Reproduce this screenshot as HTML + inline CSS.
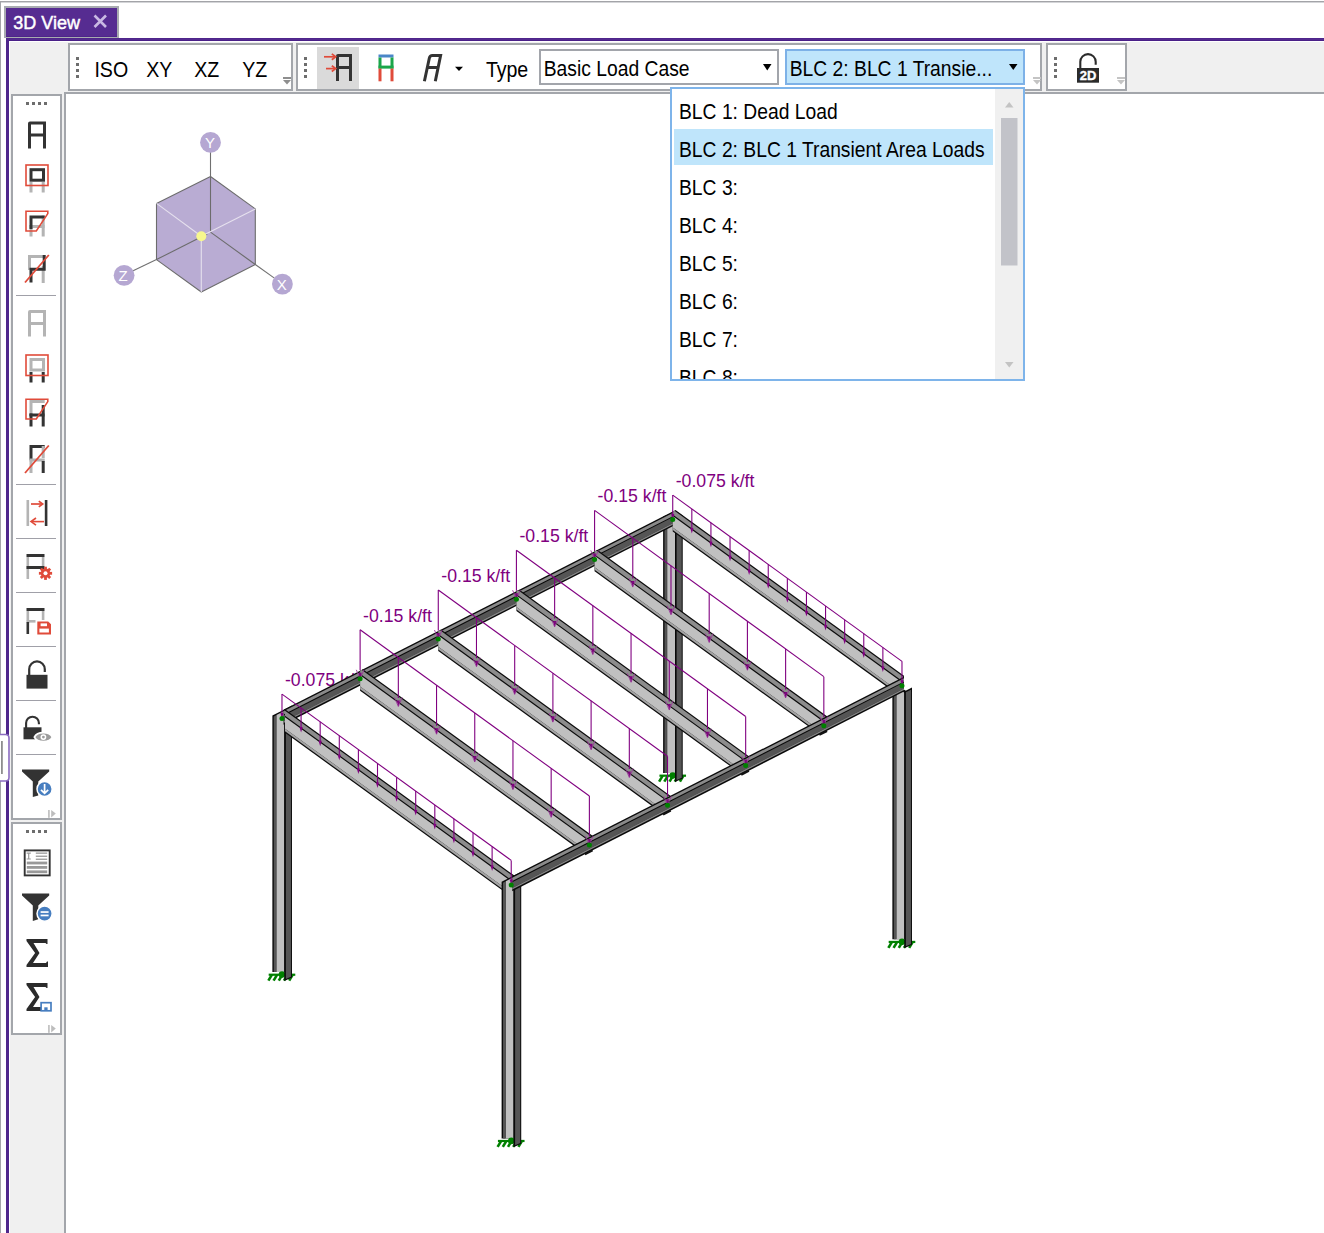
<!DOCTYPE html>
<html><head><meta charset="utf-8"><title>3D View</title>
<style>
html,body{margin:0;padding:0;background:#fff;width:1324px;height:1233px;overflow:hidden;}
svg{display:block;font-family:"Liberation Sans", sans-serif;}
</style></head><body>
<svg width="1324" height="1233" viewBox="0 0 1324 1233">
<rect x="0" y="0" width="1324" height="1233" fill="#ffffff" />
<rect x="0" y="1" width="1324" height="1" fill="#a3a4a8" />
<rect x="0" y="2" width="1324" height="1" fill="#d4d5d8" />
<rect x="0" y="1" width="1" height="1233" fill="#a3a4a8" />
<rect x="10" y="42" width="1314" height="50" fill="#f0f0f0" />
<rect x="10" y="92" width="54" height="1141" fill="#f0f0f0" />
<rect x="4" y="6" width="115" height="32" fill="#a8abb0" />
<rect x="6" y="8" width="111" height="29" fill="#562c91" />
<rect x="6" y="36" width="111" height="1" fill="#4d2589" />
<text x="13.3" y="29" font-size="18" fill="#ffffff" stroke="#ffffff" stroke-width="0.45">3D View</text>
<path d="M94.5 15.5 L106 27 M106 15.5 L94.5 27" stroke="#c9b9e3" stroke-width="2.6"/>
<rect x="6" y="38" width="1318" height="3" fill="#552b90" />
<rect x="6" y="38" width="1318" height="1" fill="#4f268b" />
<rect x="6" y="40" width="1318" height="1" fill="#4a2088" />
<rect x="6" y="38" width="3" height="1195" fill="#4f278c" />
<rect x="64" y="92" width="1260" height="2" fill="#a3a6ab" />
<rect x="64" y="92" width="2" height="1141" fill="#a3a6ab" />
<rect x="68" y="43" width="225" height="48" fill="#a3a6ab" />
<rect x="70" y="45" width="221" height="44" fill="#ffffff" />
<rect x="76" y="57" width="3" height="3" fill="#6d6d6d" />
<rect x="76" y="63" width="3" height="3" fill="#6d6d6d" />
<rect x="76" y="69" width="3" height="3" fill="#6d6d6d" />
<rect x="76" y="75" width="3" height="3" fill="#6d6d6d" />
<text transform="translate(94.4 76.9) scale(1 1.1)" font-size="19.6" fill="#000" >ISO</text>
<text transform="translate(146.3 76.9) scale(1 1.1)" font-size="19.6" fill="#000" >XY</text>
<text transform="translate(194.3 76.9) scale(1 1.1)" font-size="19.6" fill="#000" >XZ</text>
<text transform="translate(242.3 76.9) scale(1 1.1)" font-size="19.6" fill="#000" >YZ</text>
<rect x="283" y="77" width="8" height="2" fill="#8e8e8e" />
<polygon points="283,80 291,80 287,84.5" fill="#8e8e8e" />
<rect x="296" y="43" width="746" height="48" fill="#a3a6ab" />
<rect x="298" y="45" width="742" height="44" fill="#ffffff" />
<rect x="304" y="57" width="3" height="3" fill="#6d6d6d" />
<rect x="304" y="63" width="3" height="3" fill="#6d6d6d" />
<rect x="304" y="69" width="3" height="3" fill="#6d6d6d" />
<rect x="304" y="75" width="3" height="3" fill="#6d6d6d" />
<rect x="317" y="47" width="42" height="42" fill="#dadada" />
<path d="M336 81 V56 Q336 54 338 54 H352 V81 H349 V69 H339 V81 Z M339 57 V66 H349 V57 Z" fill="#333333" fill-rule="evenodd"/>
<line x1="324" y1="56.8" x2="335" y2="56.8" stroke="#e04b3a" stroke-width="1.7" />
<path d="M331.8 53.9 L335.7 56.8 L331.8 59.7" stroke="#e04b3a" stroke-width="1.7" fill="none"/>
<line x1="326" y1="68.6" x2="335" y2="68.6" stroke="#e04b3a" stroke-width="1.7" />
<path d="M331.8 65.7 L335.7 68.6 L331.8 71.5" stroke="#e04b3a" stroke-width="1.7" fill="none"/>
<rect x="378.5" y="54.5" width="15" height="3" fill="#4a86c8" />
<rect x="378.5" y="57.5" width="3" height="11" fill="#1aa64a" />
<rect x="390.5" y="57.5" width="3" height="11" fill="#1aa64a" />
<rect x="378.5" y="65.6" width="15" height="3" fill="#1aa64a" />
<rect x="378.5" y="68.6" width="3" height="12.7" fill="#e04b3a" />
<rect x="390.5" y="68.6" width="3" height="12.7" fill="#e04b3a" />
<path d="M424.4 81.3 L429.3 58.2 Q429.9 55.6 432.4 55.6 L440.6 55.6 L435.3 81.3 M427.3 67.6 L437.6 67.6" fill="none" stroke="#333" stroke-width="3"/>
<polygon points="455,66.8 463,66.8 459,71" fill="#000" />
<text transform="translate(486 76.7) scale(1 1.1)" font-size="19.6" fill="#000" letter-spacing="-0.1">Type</text>
<rect x="539" y="49" width="240" height="36" fill="#a2a5ab" />
<rect x="541" y="51" width="236" height="32" fill="#ffffff" />
<text transform="translate(543.7 76) scale(1 1.11)" font-size="19.3" fill="#000" >Basic Load Case</text>
<polygon points="763,64 771.5,64 767.25,70.5" fill="#000" />
<rect x="785" y="49" width="240" height="36" fill="#7db1e7" />
<rect x="787" y="51" width="236" height="32" fill="#bfe5fb" />
<text transform="translate(789.7 75.8) scale(1 1.11)" font-size="19.3" fill="#000" >BLC 2: BLC 1 Transie...</text>
<polygon points="1009,64 1017.5,64 1013.25,70" fill="#000" />
<rect x="1033" y="77" width="8" height="2" fill="#c4c4c4" />
<polygon points="1033,80 1041,80 1037,84.5" fill="#c4c4c4" />
<rect x="1046" y="43" width="81" height="48" fill="#a3a6ab" />
<rect x="1048" y="45" width="77" height="44" fill="#ffffff" />
<rect x="1054" y="57" width="3" height="3" fill="#6d6d6d" />
<rect x="1054" y="63" width="3" height="3" fill="#6d6d6d" />
<rect x="1054" y="69" width="3" height="3" fill="#6d6d6d" />
<rect x="1054" y="75" width="3" height="3" fill="#6d6d6d" />
<path d="M1080.3 68.5 V61.8 A7.7 7.7 0 0 1 1095.7 61.8 V64.8" stroke="#2b2b2b" stroke-width="2.1" fill="none"/>
<rect x="1077" y="68" width="22" height="14.7" fill="#2b2b2b" />
<text transform="translate(1079.7 80.4) scale(1 1.04)" font-size="13" fill="#ffffff" font-weight="bold" stroke="#fff" stroke-width="0.35">2D</text>
<rect x="1117" y="77" width="8" height="2" fill="#c4c4c4" />
<polygon points="1117,80 1125,80 1121,84.5" fill="#c4c4c4" />
<rect x="11" y="94" width="51" height="726" fill="#a3a6ab" />
<rect x="13" y="96" width="47" height="722" fill="#ffffff" />
<rect x="26" y="102" width="3" height="3" fill="#6d6d6d" />
<rect x="32" y="102" width="3" height="3" fill="#6d6d6d" />
<rect x="38" y="102" width="3" height="3" fill="#6d6d6d" />
<rect x="44" y="102" width="3" height="3" fill="#6d6d6d" />
<rect x="11" y="822" width="51" height="213" fill="#a3a6ab" />
<rect x="13" y="824" width="47" height="209" fill="#ffffff" />
<rect x="26" y="830" width="3" height="3" fill="#6d6d6d" />
<rect x="32" y="830" width="3" height="3" fill="#6d6d6d" />
<rect x="38" y="830" width="3" height="3" fill="#6d6d6d" />
<rect x="44" y="830" width="3" height="3" fill="#6d6d6d" />
<rect x="16" y="295" width="40" height="1" fill="#a0a0a8" />
<rect x="16" y="484" width="40" height="1" fill="#a0a0a8" />
<rect x="16" y="538" width="40" height="1" fill="#a0a0a8" />
<rect x="16" y="592" width="40" height="1" fill="#a0a0a8" />
<rect x="16" y="646" width="40" height="1" fill="#a0a0a8" />
<rect x="16" y="700" width="40" height="1" fill="#a0a0a8" />
<rect x="16" y="754" width="40" height="1" fill="#a0a0a8" />
<path d="M28 148.5 V123.5 Q28 121.5 30 121.5 H46 V148.5 H43 V136.5 H31 V148.5 Z M31 124.5 V133.5 H43 V124.5 Z" fill="#333333" fill-rule="evenodd"/>
<rect x="29.5" y="182" width="3" height="10.5" fill="#b4b4b4" />
<rect x="41.7" y="182" width="3" height="10.5" fill="#b4b4b4" />
<rect x="31" y="169.7" width="12.5" height="10.5" fill="none" stroke="#333" stroke-width="3"/>
<rect x="26" y="165" width="22" height="20.5" fill="none" stroke="#e04b3a" stroke-width="1.6"/>
<rect x="29.5" y="225" width="3" height="11.5" fill="#b4b4b4" />
<rect x="41.7" y="215.5" width="3" height="21" fill="#b4b4b4" />
<rect x="29.5" y="225" width="15" height="3" fill="#b4b4b4" />
<path d="M31 229 V217 H44.7" fill="none" stroke="#333" stroke-width="3"/>
<path d="M26 211.2 H47.8 V213.6 L36.3 231 H26 Z" fill="none" stroke="#e04b3a" stroke-width="1.6"/>
<path d="M29.5 270 V256.5 H44.7" fill="none" stroke="#b4b4b4" stroke-width="3"/>
<rect x="41.7" y="266" width="3" height="17" fill="#b4b4b4" />
<path d="M44.2 255 V269.2 H31 V282.5" fill="none" stroke="#333" stroke-width="3"/>
<line x1="25" y1="282.5" x2="48.8" y2="255" stroke="#e04b3a" stroke-width="1.8" />
<path d="M28 336.5 V312 Q28 310 30 310 H46 V336.5 H43 V325 H31 V336.5 Z M31 313 V322 H43 V313 Z" fill="#b4b4b4" fill-rule="evenodd"/>
<rect x="29.5" y="372" width="3" height="10.5" fill="#333" />
<rect x="41.7" y="372" width="3" height="10.5" fill="#333" />
<rect x="31" y="359.5" width="12.5" height="10.5" fill="none" stroke="#b4b4b4" stroke-width="3"/>
<rect x="26" y="355" width="22" height="20.5" fill="none" stroke="#e04b3a" stroke-width="1.6"/>
<path d="M31 416 V401.5 H44.7" fill="none" stroke="#b4b4b4" stroke-width="3"/>
<rect x="29.5" y="413.5" width="3" height="13" fill="#333" />
<rect x="41.7" y="405" width="3" height="21.5" fill="#333" />
<rect x="29.5" y="413.5" width="15" height="3" fill="#333" />
<path d="M26 399.2 H47.8 V401.6 L36.3 419 H26 Z" fill="none" stroke="#e04b3a" stroke-width="1.6"/>
<path d="M31 460 V446.5 H44.7" fill="none" stroke="#333" stroke-width="3"/>
<rect x="29.5" y="459" width="3" height="14" fill="#b4b4b4" />
<rect x="41.7" y="446" width="3" height="12" fill="#b4b4b4" />
<rect x="29.5" y="458.5" width="15.2" height="3" fill="#b4b4b4" />
<rect x="41.7" y="461" width="3" height="12" fill="#333" />
<line x1="25" y1="473" x2="48.8" y2="445.5" stroke="#e04b3a" stroke-width="1.8" />
<rect x="26.5" y="500" width="2.6" height="26" fill="#b4b4b4" />
<rect x="44.8" y="500" width="2.6" height="26" fill="#333" />
<line x1="31" y1="504" x2="42" y2="504" stroke="#e04b3a" stroke-width="1.7" />
<path d="M38.8 501.1 L42.7 504 L38.8 506.9" stroke="#e04b3a" stroke-width="1.7" fill="none"/>
<line x1="32" y1="521.6" x2="44" y2="521.6" stroke="#e04b3a" stroke-width="1.6" />
<path d="M36 518 L31 521.6 L36 525.2" stroke="#e04b3a" stroke-width="1.6" fill="none"/>
<rect x="26.5" y="554" width="18" height="3" fill="#333" />
<rect x="26.5" y="557" width="2.6" height="22" fill="#b4b4b4" />
<rect x="41.8" y="557" width="2.6" height="9" fill="#b4b4b4" />
<rect x="26.5" y="566" width="18" height="3" fill="#333" />
<circle cx="45.5" cy="573.3" r="4.7" fill="#e04b3a"/>
<rect x="44.1" y="566.7" width="2.8" height="3.2" fill="#e04b3a" transform="rotate(0 45.5 573.3)"/>
<rect x="44.1" y="566.7" width="2.8" height="3.2" fill="#e04b3a" transform="rotate(45 45.5 573.3)"/>
<rect x="44.1" y="566.7" width="2.8" height="3.2" fill="#e04b3a" transform="rotate(90 45.5 573.3)"/>
<rect x="44.1" y="566.7" width="2.8" height="3.2" fill="#e04b3a" transform="rotate(135 45.5 573.3)"/>
<rect x="44.1" y="566.7" width="2.8" height="3.2" fill="#e04b3a" transform="rotate(180 45.5 573.3)"/>
<rect x="44.1" y="566.7" width="2.8" height="3.2" fill="#e04b3a" transform="rotate(225 45.5 573.3)"/>
<rect x="44.1" y="566.7" width="2.8" height="3.2" fill="#e04b3a" transform="rotate(270 45.5 573.3)"/>
<rect x="44.1" y="566.7" width="2.8" height="3.2" fill="#e04b3a" transform="rotate(315 45.5 573.3)"/>
<circle cx="45.5" cy="573.3" r="2" fill="#fff"/>
<rect x="26.5" y="608" width="18" height="3" fill="#333" />
<rect x="41.8" y="611" width="2.6" height="9" fill="#b4b4b4" />
<rect x="26.5" y="611" width="2.6" height="9.5" fill="#b4b4b4" />
<rect x="26.5" y="620" width="9" height="2.6" fill="#b4b4b4" />
<rect x="26.5" y="622" width="2.6" height="12" fill="#333" />
<path d="M37.3 621.4 H48.2 L51 624.2 V634.6 H37.3 Z" fill="#e04b3a"/>
<rect x="39.4" y="628.6" width="9.5" height="3.9" fill="#ffffff" />
<rect x="40.6" y="623.4" width="6.4" height="2.8" fill="#ffffff" />
<path d="M29.2 675 V669.2 A7.8 7.8 0 0 1 44.8 669.2 V672" stroke="#333" stroke-width="2.2" fill="none"/>
<rect x="26.5" y="674.8" width="21" height="13.8" fill="#333" />
<path d="M26.1 728 V723.1 A6.4 6.4 0 0 1 38.9 723.1 V724.2" stroke="#333" stroke-width="2.1" fill="none"/>
<rect x="23.5" y="727.3" width="18" height="12" fill="#333" />
<path d="M34.4 737.1 C37.2 731.2 49.6 731.2 52.4 737.1 C49.6 743 37.2 743 34.4 737.1 Z" fill="#9c9c9c" stroke="#fff" stroke-width="1.8"/>
<circle cx="43.4" cy="737.1" r="2.9" fill="#fff"/>
<circle cx="43.4" cy="737.1" r="1.4" fill="#9c9c9c"/>
<polygon points="22,769.5 49.2,769.5 49.2,771.6 38.3,781.5 38.3,795.5 32.8,797 32.8,781.5 22,771.6" fill="#333" />
<circle cx="44.6" cy="789" r="7.6" fill="#477ec0" stroke="#fff" stroke-width="1.5"/>
<path d="M44.6 784 V793 M41 789.8 L44.6 793.3 L48.2 789.8" stroke="#fff" stroke-width="1.7" fill="none"/>
<rect x="48" y="810" width="1.8" height="7.8" fill="#c4c4c4" />
<polygon points="51.2,810 55.8,813.5 51.2,817.6" fill="#bdbdbd" />
<rect x="48" y="1025" width="1.8" height="7.8" fill="#c4c4c4" />
<polygon points="51.2,1025 55.8,1028.5 51.2,1032.6" fill="#bdbdbd" />
<rect x="24.7" y="850.4" width="25" height="25" fill="#fff" stroke="#333" stroke-width="1.9"/>
<rect x="26.8" y="861.6" width="20.4" height="2.8" fill="#999999" />
<rect x="26.8" y="866" width="20.4" height="2.8" fill="#999999" />
<rect x="26.8" y="870.4" width="20.4" height="2.8" fill="#999999" />
<rect x="35.8" y="852.5" width="11.4" height="1.3" fill="#999999" />
<rect x="35.8" y="855.6" width="11.4" height="1.3" fill="#999999" />
<rect x="35.8" y="858.6" width="11.4" height="1.3" fill="#999999" />
<path d="M26.6 853.2 H30.8 M28.7 853.2 V859 M26.6 859 H30.8" stroke="#999" stroke-width="1.2"/>
<polygon points="22,893.5 49.2,893.5 49.2,895.6 38.3,905.5 38.3,919.2 32.8,921 32.8,905.5 22,895.6" fill="#333" />
<circle cx="44.6" cy="913.6" r="7.6" fill="#477ec0" stroke="#fff" stroke-width="1.5"/>
<rect x="40.6" y="911.2" width="8" height="1.7" fill="#fff" />
<rect x="40.6" y="914.6" width="8" height="1.7" fill="#fff" />
<path d="M26.5 939 H47.5 V944 H46.5 L45.5 943 H33.5 L39.5 953 L33 963 H46 L47 961.5 H48 V967 H26.5 V965 L35.1 953 L26.5 941 Z" fill="#2b2b2b"/>
<path d="M26.5 983 H47.5 V988 H46.5 L45.5 987 H33.5 L39.5 997 L33 1007 H46 L47 1005.5 H48 V1011 H26.5 V1009 L35.1 997 L26.5 985 Z" fill="#2b2b2b"/>
<rect x="41.1" y="1002.7" width="9.9" height="8.1" fill="#fff" stroke="#477ec0" stroke-width="1.7"/>
<rect x="44.3" y="1007.3" width="3.3" height="3.5" fill="#477ec0" />
<path d="M0 734.5 H5.5 Q9 734.5 9 738 V777.5 Q9 781 5.5 781 H0" fill="#ffffff" stroke="#8b6cc0" stroke-width="1.6"/>
<rect x="1" y="741" width="1.8" height="33" fill="#8e8e8e" />
<line x1="210.5" y1="152" x2="210.5" y2="176.5" stroke="#707070" stroke-width="1.1" />
<line x1="133.1" y1="270.7" x2="156.5" y2="259.6" stroke="#707070" stroke-width="1.1" />
<line x1="255.3" y1="264.5" x2="274.4" y2="278.1" stroke="#707070" stroke-width="1.1" />
<polygon points="210.5,176.5 255.3,208.9 255.3,264.5 201.3,292 156.5,259.6 156.5,203.4" fill="#b9acd3" stroke="#6c6c6c" stroke-width="1.1" stroke-linejoin="round"/>
<line x1="210.5" y1="176.5" x2="210.5" y2="232.1" stroke="#6c6c6c" stroke-width="1.1" />
<line x1="210.5" y1="232.1" x2="255.3" y2="264.5" stroke="#6c6c6c" stroke-width="1.1" />
<line x1="156.5" y1="259.6" x2="207.5" y2="233.7" stroke="#6c6c6c" stroke-width="1.1" />
<line x1="156.5" y1="203.4" x2="201.3" y2="236.3" stroke="#e6e1ee" stroke-width="1.1" />
<line x1="255.3" y1="208.9" x2="201.3" y2="236.3" stroke="#e6e1ee" stroke-width="1.1" />
<line x1="201.3" y1="236.3" x2="201.3" y2="292" stroke="#e6e1ee" stroke-width="1.1" />
<circle cx="201.3" cy="236.3" r="5" fill="#f7f78e"/>
<circle cx="210.5" cy="142.4" r="10.4" fill="#b5a7d2"/>
<text x="204.9" y="148" font-size="15" fill="#ffffff" >Y</text>
<circle cx="124.1" cy="275.3" r="10.4" fill="#b5a7d2"/>
<text x="118.5" y="280.9" font-size="15" fill="#ffffff" >Z</text>
<circle cx="282.4" cy="284.1" r="10.4" fill="#b5a7d2"/>
<text x="276.8" y="289.7" font-size="15" fill="#ffffff" >X</text>
<text x="675.73" y="487.18" font-size="17.7" fill="#800080" >-0.075 k/ft</text>
<text x="597.58" y="502.49" font-size="17.7" fill="#800080" >-0.15 k/ft</text>
<text x="519.42" y="542.3" font-size="17.7" fill="#800080" >-0.15 k/ft</text>
<text x="441.28" y="582.11" font-size="17.7" fill="#800080" >-0.15 k/ft</text>
<text x="363.12" y="621.92" font-size="17.7" fill="#800080" >-0.15 k/ft</text>
<text x="284.98" y="686.23" font-size="17.7" fill="#800080" >-0.075 k/ft</text>
<polygon points="663.12,516.47 676.62,511.1 676.62,773.08 663.12,773.08" fill="#0a0a0a" />
<polygon points="664.52,517.35 666.93,516.13 666.93,773.08 664.52,773.08" fill="#555555" />
<polygon points="667.23,515.98 675.02,512 675.02,773.08 667.23,773.08" fill="#c0c0c0" />
<rect x="659.43" y="774.58" width="26.6" height="2.2" fill="#008000" />
<line x1="662.73" y1="775.58" x2="659.12" y2="781.58" stroke="#008000" stroke-width="2.6" />
<line x1="667.93" y1="775.58" x2="664.33" y2="781.58" stroke="#008000" stroke-width="2.6" />
<line x1="673.12" y1="775.58" x2="669.52" y2="781.58" stroke="#008000" stroke-width="2.6" />
<line x1="678.33" y1="775.58" x2="674.73" y2="781.58" stroke="#008000" stroke-width="2.6" />
<line x1="683.52" y1="775.58" x2="679.92" y2="781.58" stroke="#008000" stroke-width="2.6" />
<circle cx="672.73" cy="775.58" r="3.3" fill="#008000"/>
<polygon points="675.02,510.4 682.73,515.53 682.73,778.43 675.02,781.89" fill="#0a0a0a" />
<polygon points="676.62,512.7 681.73,516.4 681.73,777.67 676.62,779.97" fill="#555555" />
<polygon points="272.38,715.52 285.88,708.64 285.88,972.12 272.38,972.12" fill="#0a0a0a" />
<polygon points="273.78,716.4 276.18,715.18 276.18,972.12 273.78,972.12" fill="#555555" />
<polygon points="276.48,715.03 284.28,711.05 284.28,972.12 276.48,972.12" fill="#c0c0c0" />
<rect x="268.68" y="973.62" width="26.6" height="2.2" fill="#008000" />
<line x1="271.98" y1="974.62" x2="268.38" y2="980.62" stroke="#008000" stroke-width="2.6" />
<line x1="277.18" y1="974.62" x2="273.57" y2="980.62" stroke="#008000" stroke-width="2.6" />
<line x1="282.38" y1="974.62" x2="278.77" y2="980.62" stroke="#008000" stroke-width="2.6" />
<line x1="287.58" y1="974.62" x2="283.98" y2="980.62" stroke="#008000" stroke-width="2.6" />
<line x1="292.78" y1="974.62" x2="289.18" y2="980.62" stroke="#008000" stroke-width="2.6" />
<circle cx="281.98" cy="974.62" r="3.3" fill="#008000"/>
<polygon points="284.28,709.45 291.98,705.53 291.98,977.48 284.28,980.94" fill="#0a0a0a" />
<polygon points="285.88,710.24 290.98,707.64 290.98,976.72 285.88,979.02" fill="#555555" />
<polygon points="674.23,510.81 283.48,709.86 283.48,724.66 674.23,525.61" fill="#0a0a0a" />
<polygon points="674.23,512.31 283.48,711.36 283.48,714.46 674.23,515.41" fill="#8a8a8a" />
<polygon points="674.23,516.61 283.48,715.66 283.48,721.46 674.23,522.41" fill="#555555" />
<polygon points="674.23,522.41 283.48,721.46 283.48,723.06 674.23,524.01" fill="#858585" />
<clipPath id="xc0"><polygon points="670.23,512.85 903.98,393.78 903.98,1019.58 670.23,1019.58"/></clipPath>
<g clip-path="url(#xc0)">
<polygon points="672.73,507.98 911.37,681.04 892.34,690.74 672.73,531.48" fill="#0a0a0a" />
<polygon points="672.73,509.48 910.16,681.66 906.02,683.76 672.73,514.58" fill="#8c8c8c" />
<polygon points="672.73,515.98 904.89,684.34 895.66,689.04 672.73,527.38" fill="#c0c0c0" />
<polygon points="672.73,527.38 895.66,689.04 893.55,690.12 672.73,529.98" fill="#a4a4a4" />
</g>
<clipPath id="xc1"><polygon points="592.08,552.66 1092.08,297.96 1092.08,1059.38 592.08,1059.38"/></clipPath>
<g clip-path="url(#xc1)">
<polygon points="594.58,547.78 833.22,720.85 814.19,730.55 594.58,571.28" fill="#0a0a0a" />
<polygon points="594.58,549.28 832.01,721.47 827.87,723.57 594.58,554.38" fill="#8c8c8c" />
<polygon points="594.58,555.78 826.74,724.15 817.51,728.85 594.58,567.18" fill="#c0c0c0" />
<polygon points="594.58,567.18 817.51,728.85 815.4,729.93 594.58,569.78" fill="#a4a4a4" />
</g>
<clipPath id="xc2"><polygon points="513.92,592.47 1013.92,337.77 1013.92,1099.20 513.92,1099.20"/></clipPath>
<g clip-path="url(#xc2)">
<polygon points="516.42,587.6 755.07,760.66 736.04,770.36 516.42,611.1" fill="#0a0a0a" />
<polygon points="516.42,589.1 753.86,761.28 749.72,763.38 516.42,594.2" fill="#8c8c8c" />
<polygon points="516.42,595.6 748.59,763.96 739.36,768.66 516.42,607" fill="#c0c0c0" />
<polygon points="516.42,607 739.36,768.66 737.25,769.74 516.42,609.6" fill="#a4a4a4" />
</g>
<clipPath id="xc3"><polygon points="435.78,632.28 935.78,377.58 935.78,1139.01 435.78,1139.01"/></clipPath>
<g clip-path="url(#xc3)">
<polygon points="438.28,627.4 676.92,800.47 657.89,810.17 438.28,650.9" fill="#0a0a0a" />
<polygon points="438.28,628.9 675.71,801.09 671.57,803.19 438.28,634" fill="#8c8c8c" />
<polygon points="438.28,635.4 670.44,803.77 661.21,808.47 438.28,646.8" fill="#c0c0c0" />
<polygon points="438.28,646.8 661.21,808.47 659.1,809.55 438.28,649.4" fill="#a4a4a4" />
</g>
<clipPath id="xc4"><polygon points="357.62,672.09 857.62,417.39 857.62,1178.82 357.62,1178.82"/></clipPath>
<g clip-path="url(#xc4)">
<polygon points="360.12,667.22 598.77,840.28 579.74,849.98 360.12,690.72" fill="#0a0a0a" />
<polygon points="360.12,668.72 597.56,840.9 593.42,843 360.12,673.82" fill="#8c8c8c" />
<polygon points="360.12,675.22 592.29,843.58 583.06,848.28 360.12,686.62" fill="#c0c0c0" />
<polygon points="360.12,686.62 583.06,848.28 580.95,849.36 360.12,689.22" fill="#a4a4a4" />
</g>
<clipPath id="xc5"><polygon points="284.98,709.10 784.98,454.39 784.98,1218.62 284.98,1218.62"/></clipPath>
<g clip-path="url(#xc5)">
<polygon points="281.98,707.02 520.62,880.09 501.59,889.79 281.98,730.52" fill="#0a0a0a" />
<polygon points="281.98,708.52 519.41,880.71 515.27,882.81 281.98,713.62" fill="#8c8c8c" />
<polygon points="281.98,715.02 514.14,883.39 504.91,888.09 281.98,726.42" fill="#c0c0c0" />
<polygon points="281.98,726.42 504.91,888.09 502.8,889.17 281.98,729.02" fill="#a4a4a4" />
</g>
<polygon points="501.62,881.77 515.12,874.89 515.12,1138.38 501.62,1138.38" fill="#0a0a0a" />
<polygon points="503.03,882.65 505.43,881.43 505.43,1138.38 503.03,1138.38" fill="#555555" />
<polygon points="505.73,881.28 513.52,877.3 513.52,1138.38 505.73,1138.38" fill="#c0c0c0" />
<rect x="497.93" y="1139.88" width="26.6" height="2.2" fill="#008000" />
<line x1="501.23" y1="1140.88" x2="497.62" y2="1146.88" stroke="#008000" stroke-width="2.6" />
<line x1="506.43" y1="1140.88" x2="502.82" y2="1146.88" stroke="#008000" stroke-width="2.6" />
<line x1="511.62" y1="1140.88" x2="508.02" y2="1146.88" stroke="#008000" stroke-width="2.6" />
<line x1="516.83" y1="1140.88" x2="513.23" y2="1146.88" stroke="#008000" stroke-width="2.6" />
<line x1="522.02" y1="1140.88" x2="518.42" y2="1146.88" stroke="#008000" stroke-width="2.6" />
<circle cx="511.23" cy="1140.88" r="3.3" fill="#008000"/>
<polygon points="513.52,875.7 521.23,871.78 521.23,1143.72 513.52,1147.19" fill="#0a0a0a" />
<polygon points="515.12,876.49 520.23,873.89 520.23,1142.97 515.12,1145.27" fill="#555555" />
<polygon points="892.38,682.72 905.88,690.64 905.88,939.33 892.38,939.33" fill="#0a0a0a" />
<polygon points="893.77,683.6 896.18,682.38 896.18,939.33 893.77,939.33" fill="#555555" />
<polygon points="896.48,682.23 904.27,693.05 904.27,939.33 896.48,939.33" fill="#c0c0c0" />
<rect x="888.68" y="940.83" width="26.6" height="2.2" fill="#008000" />
<line x1="891.98" y1="941.83" x2="888.38" y2="947.83" stroke="#008000" stroke-width="2.6" />
<line x1="897.18" y1="941.83" x2="893.58" y2="947.83" stroke="#008000" stroke-width="2.6" />
<line x1="902.38" y1="941.83" x2="898.77" y2="947.83" stroke="#008000" stroke-width="2.6" />
<line x1="907.58" y1="941.83" x2="903.98" y2="947.83" stroke="#008000" stroke-width="2.6" />
<line x1="912.77" y1="941.83" x2="909.17" y2="947.83" stroke="#008000" stroke-width="2.6" />
<circle cx="901.98" cy="941.83" r="3.3" fill="#008000"/>
<polygon points="904.27,691.45 911.98,687.53 911.98,944.68 904.27,948.14" fill="#0a0a0a" />
<polygon points="905.88,692.24 910.98,689.64 910.98,943.92 905.88,946.22" fill="#555555" />
<polygon points="903.98,676.81 512.23,876.37 512.23,891.17 903.98,691.61" fill="#0a0a0a" />
<polygon points="903.98,678.31 512.23,877.87 512.23,880.97 903.98,681.41" fill="#8a8a8a" />
<polygon points="903.98,682.61 512.23,882.17 512.23,887.97 903.98,688.41" fill="#555555" />
<polygon points="903.98,688.41 512.23,887.97 512.23,889.57 903.98,690.01" fill="#858585" />
<path d="M819.33 734.84 L827.03 730.93" stroke="#111" stroke-width="2.2" fill="none"/>
<path d="M741.17 774.65 L748.88 770.75" stroke="#111" stroke-width="2.2" fill="none"/>
<path d="M663.03 814.46 L670.73 810.55" stroke="#111" stroke-width="2.2" fill="none"/>
<path d="M584.88 854.27 L592.58 850.37" stroke="#111" stroke-width="2.2" fill="none"/>
<line x1="672.73" y1="495.08" x2="901.98" y2="661.33" stroke="#800080" stroke-width="1.1" />
<line x1="672.73" y1="495.08" x2="672.73" y2="515.58" stroke="#800080" stroke-width="1.1" />
<polygon points="671.12,514.08 674.33,514.08 672.73,519.58" fill="#800080" />
<line x1="691.83" y1="508.93" x2="691.83" y2="529.43" stroke="#800080" stroke-width="1.1" />
<polygon points="690.23,527.93 693.43,527.93 691.83,533.43" fill="#800080" />
<line x1="710.93" y1="522.78" x2="710.93" y2="543.28" stroke="#800080" stroke-width="1.1" />
<polygon points="709.33,541.78 712.53,541.78 710.93,547.28" fill="#800080" />
<line x1="730.04" y1="536.64" x2="730.04" y2="557.14" stroke="#800080" stroke-width="1.1" />
<polygon points="728.44,555.64 731.64,555.64 730.04,561.14" fill="#800080" />
<line x1="749.14" y1="550.49" x2="749.14" y2="570.99" stroke="#800080" stroke-width="1.1" />
<polygon points="747.54,569.49 750.74,569.49 749.14,574.99" fill="#800080" />
<line x1="768.25" y1="564.35" x2="768.25" y2="584.85" stroke="#800080" stroke-width="1.1" />
<polygon points="766.65,583.35 769.85,583.35 768.25,588.85" fill="#800080" />
<line x1="787.35" y1="578.2" x2="787.35" y2="598.7" stroke="#800080" stroke-width="1.1" />
<polygon points="785.75,597.2 788.95,597.2 787.35,602.7" fill="#800080" />
<line x1="806.45" y1="592.05" x2="806.45" y2="612.55" stroke="#800080" stroke-width="1.1" />
<polygon points="804.85,611.05 808.05,611.05 806.45,616.55" fill="#800080" />
<line x1="825.56" y1="605.91" x2="825.56" y2="626.41" stroke="#800080" stroke-width="1.1" />
<polygon points="823.96,624.91 827.16,624.91 825.56,630.41" fill="#800080" />
<line x1="844.66" y1="619.76" x2="844.66" y2="640.26" stroke="#800080" stroke-width="1.1" />
<polygon points="843.06,638.76 846.26,638.76 844.66,644.26" fill="#800080" />
<line x1="863.77" y1="633.62" x2="863.77" y2="654.12" stroke="#800080" stroke-width="1.1" />
<polygon points="862.17,652.62 865.37,652.62 863.77,658.12" fill="#800080" />
<line x1="882.87" y1="647.47" x2="882.87" y2="667.97" stroke="#800080" stroke-width="1.1" />
<polygon points="881.27,666.47 884.47,666.47 882.87,671.97" fill="#800080" />
<line x1="901.98" y1="661.33" x2="901.98" y2="681.83" stroke="#800080" stroke-width="1.1" />
<polygon points="900.38,680.33 903.58,680.33 901.98,685.83" fill="#800080" />
<line x1="594.58" y1="510.38" x2="823.83" y2="676.63" stroke="#800080" stroke-width="1.1" />
<line x1="594.58" y1="510.38" x2="594.58" y2="550.88" stroke="#800080" stroke-width="1.1" />
<path d="M590.78 550.38 L594.58 559.38 L598.38 550.38" fill="none" stroke="#9a3a9a" stroke-width="0.9"/>
<polygon points="593.08,553.38 596.08,553.38 594.58,559.38" fill="#800080" />
<line x1="632.78" y1="538.09" x2="632.78" y2="578.59" stroke="#800080" stroke-width="1.1" />
<path d="M628.98 578.09 L632.78 587.09 L636.58 578.09" fill="none" stroke="#9a3a9a" stroke-width="0.9"/>
<polygon points="631.28,581.09 634.28,581.09 632.78,587.09" fill="#800080" />
<line x1="670.99" y1="565.8" x2="670.99" y2="606.3" stroke="#800080" stroke-width="1.1" />
<path d="M667.19 605.8 L670.99 614.8 L674.79 605.8" fill="none" stroke="#9a3a9a" stroke-width="0.9"/>
<polygon points="669.49,608.8 672.49,608.8 670.99,614.8" fill="#800080" />
<line x1="709.2" y1="593.51" x2="709.2" y2="634.01" stroke="#800080" stroke-width="1.1" />
<path d="M705.4 633.51 L709.2 642.51 L713 633.51" fill="none" stroke="#9a3a9a" stroke-width="0.9"/>
<polygon points="707.7,636.51 710.7,636.51 709.2,642.51" fill="#800080" />
<line x1="747.41" y1="621.22" x2="747.41" y2="661.72" stroke="#800080" stroke-width="1.1" />
<path d="M743.61 661.22 L747.41 670.22 L751.21 661.22" fill="none" stroke="#9a3a9a" stroke-width="0.9"/>
<polygon points="745.91,664.22 748.91,664.22 747.41,670.22" fill="#800080" />
<line x1="785.62" y1="648.93" x2="785.62" y2="689.43" stroke="#800080" stroke-width="1.1" />
<path d="M781.82 688.93 L785.62 697.93 L789.42 688.93" fill="none" stroke="#9a3a9a" stroke-width="0.9"/>
<polygon points="784.12,691.93 787.12,691.93 785.62,697.93" fill="#800080" />
<line x1="823.83" y1="676.63" x2="823.83" y2="717.13" stroke="#800080" stroke-width="1.1" />
<path d="M820.03 716.63 L823.83 725.63 L827.62 716.63" fill="none" stroke="#9a3a9a" stroke-width="0.9"/>
<polygon points="822.33,719.63 825.33,719.63 823.83,725.63" fill="#800080" />
<line x1="516.42" y1="550.2" x2="745.67" y2="716.45" stroke="#800080" stroke-width="1.1" />
<line x1="516.42" y1="550.2" x2="516.42" y2="590.7" stroke="#800080" stroke-width="1.1" />
<path d="M512.62 590.2 L516.42 599.2 L520.22 590.2" fill="none" stroke="#9a3a9a" stroke-width="0.9"/>
<polygon points="514.92,593.2 517.92,593.2 516.42,599.2" fill="#800080" />
<line x1="554.63" y1="577.9" x2="554.63" y2="618.4" stroke="#800080" stroke-width="1.1" />
<path d="M550.83 617.9 L554.63 626.9 L558.43 617.9" fill="none" stroke="#9a3a9a" stroke-width="0.9"/>
<polygon points="553.13,620.9 556.13,620.9 554.63,626.9" fill="#800080" />
<line x1="592.84" y1="605.61" x2="592.84" y2="646.11" stroke="#800080" stroke-width="1.1" />
<path d="M589.04 645.61 L592.84 654.61 L596.64 645.61" fill="none" stroke="#9a3a9a" stroke-width="0.9"/>
<polygon points="591.34,648.61 594.34,648.61 592.84,654.61" fill="#800080" />
<line x1="631.05" y1="633.32" x2="631.05" y2="673.82" stroke="#800080" stroke-width="1.1" />
<path d="M627.25 673.32 L631.05 682.32 L634.85 673.32" fill="none" stroke="#9a3a9a" stroke-width="0.9"/>
<polygon points="629.55,676.32 632.55,676.32 631.05,682.32" fill="#800080" />
<line x1="669.26" y1="661.03" x2="669.26" y2="701.53" stroke="#800080" stroke-width="1.1" />
<path d="M665.46 701.03 L669.26 710.03 L673.06 701.03" fill="none" stroke="#9a3a9a" stroke-width="0.9"/>
<polygon points="667.76,704.03 670.76,704.03 669.26,710.03" fill="#800080" />
<line x1="707.47" y1="688.74" x2="707.47" y2="729.24" stroke="#800080" stroke-width="1.1" />
<path d="M703.67 728.74 L707.47 737.74 L711.27 728.74" fill="none" stroke="#9a3a9a" stroke-width="0.9"/>
<polygon points="705.97,731.74 708.97,731.74 707.47,737.74" fill="#800080" />
<line x1="745.67" y1="716.45" x2="745.67" y2="756.95" stroke="#800080" stroke-width="1.1" />
<path d="M741.88 756.45 L745.67 765.45 L749.47 756.45" fill="none" stroke="#9a3a9a" stroke-width="0.9"/>
<polygon points="744.17,759.45 747.17,759.45 745.67,765.45" fill="#800080" />
<line x1="438.28" y1="590" x2="667.53" y2="756.25" stroke="#800080" stroke-width="1.1" />
<line x1="438.28" y1="590" x2="438.28" y2="630.5" stroke="#800080" stroke-width="1.1" />
<path d="M434.48 630 L438.28 639 L442.08 630" fill="none" stroke="#9a3a9a" stroke-width="0.9"/>
<polygon points="436.78,633 439.78,633 438.28,639" fill="#800080" />
<line x1="476.48" y1="617.71" x2="476.48" y2="658.21" stroke="#800080" stroke-width="1.1" />
<path d="M472.68 657.71 L476.48 666.71 L480.28 657.71" fill="none" stroke="#9a3a9a" stroke-width="0.9"/>
<polygon points="474.98,660.71 477.98,660.71 476.48,666.71" fill="#800080" />
<line x1="514.69" y1="645.42" x2="514.69" y2="685.92" stroke="#800080" stroke-width="1.1" />
<path d="M510.89 685.42 L514.69 694.42 L518.49 685.42" fill="none" stroke="#9a3a9a" stroke-width="0.9"/>
<polygon points="513.19,688.42 516.19,688.42 514.69,694.42" fill="#800080" />
<line x1="552.9" y1="673.13" x2="552.9" y2="713.63" stroke="#800080" stroke-width="1.1" />
<path d="M549.1 713.13 L552.9 722.13 L556.7 713.13" fill="none" stroke="#9a3a9a" stroke-width="0.9"/>
<polygon points="551.4,716.13 554.4,716.13 552.9,722.13" fill="#800080" />
<line x1="591.11" y1="700.84" x2="591.11" y2="741.34" stroke="#800080" stroke-width="1.1" />
<path d="M587.31 740.84 L591.11 749.84 L594.91 740.84" fill="none" stroke="#9a3a9a" stroke-width="0.9"/>
<polygon points="589.61,743.84 592.61,743.84 591.11,749.84" fill="#800080" />
<line x1="629.32" y1="728.55" x2="629.32" y2="769.05" stroke="#800080" stroke-width="1.1" />
<path d="M625.52 768.55 L629.32 777.55 L633.12 768.55" fill="none" stroke="#9a3a9a" stroke-width="0.9"/>
<polygon points="627.82,771.55 630.82,771.55 629.32,777.55" fill="#800080" />
<line x1="667.53" y1="756.25" x2="667.53" y2="796.75" stroke="#800080" stroke-width="1.1" />
<path d="M663.73 796.25 L667.53 805.25 L671.33 796.25" fill="none" stroke="#9a3a9a" stroke-width="0.9"/>
<polygon points="666.03,799.25 669.03,799.25 667.53,805.25" fill="#800080" />
<line x1="360.12" y1="629.82" x2="589.38" y2="796.07" stroke="#800080" stroke-width="1.1" />
<line x1="360.12" y1="629.82" x2="360.12" y2="670.32" stroke="#800080" stroke-width="1.1" />
<path d="M356.32 669.82 L360.12 678.82 L363.93 669.82" fill="none" stroke="#9a3a9a" stroke-width="0.9"/>
<polygon points="358.62,672.82 361.62,672.82 360.12,678.82" fill="#800080" />
<line x1="398.33" y1="657.52" x2="398.33" y2="698.02" stroke="#800080" stroke-width="1.1" />
<path d="M394.53 697.52 L398.33 706.52 L402.13 697.52" fill="none" stroke="#9a3a9a" stroke-width="0.9"/>
<polygon points="396.83,700.52 399.83,700.52 398.33,706.52" fill="#800080" />
<line x1="436.54" y1="685.23" x2="436.54" y2="725.73" stroke="#800080" stroke-width="1.1" />
<path d="M432.74 725.23 L436.54 734.23 L440.34 725.23" fill="none" stroke="#9a3a9a" stroke-width="0.9"/>
<polygon points="435.04,728.23 438.04,728.23 436.54,734.23" fill="#800080" />
<line x1="474.75" y1="712.94" x2="474.75" y2="753.44" stroke="#800080" stroke-width="1.1" />
<path d="M470.95 752.94 L474.75 761.94 L478.55 752.94" fill="none" stroke="#9a3a9a" stroke-width="0.9"/>
<polygon points="473.25,755.94 476.25,755.94 474.75,761.94" fill="#800080" />
<line x1="512.96" y1="740.65" x2="512.96" y2="781.15" stroke="#800080" stroke-width="1.1" />
<path d="M509.16 780.65 L512.96 789.65 L516.76 780.65" fill="none" stroke="#9a3a9a" stroke-width="0.9"/>
<polygon points="511.46,783.65 514.46,783.65 512.96,789.65" fill="#800080" />
<line x1="551.17" y1="768.36" x2="551.17" y2="808.86" stroke="#800080" stroke-width="1.1" />
<path d="M547.37 808.36 L551.17 817.36 L554.97 808.36" fill="none" stroke="#9a3a9a" stroke-width="0.9"/>
<polygon points="549.67,811.36 552.67,811.36 551.17,817.36" fill="#800080" />
<line x1="589.38" y1="796.07" x2="589.38" y2="836.57" stroke="#800080" stroke-width="1.1" />
<path d="M585.58 836.07 L589.38 845.07 L593.17 836.07" fill="none" stroke="#9a3a9a" stroke-width="0.9"/>
<polygon points="587.88,839.07 590.88,839.07 589.38,845.07" fill="#800080" />
<line x1="281.98" y1="694.12" x2="511.23" y2="860.38" stroke="#800080" stroke-width="1.1" />
<line x1="281.98" y1="694.12" x2="281.98" y2="714.62" stroke="#800080" stroke-width="1.1" />
<polygon points="280.38,713.12 283.58,713.12 281.98,718.62" fill="#800080" />
<line x1="301.08" y1="707.98" x2="301.08" y2="728.48" stroke="#800080" stroke-width="1.1" />
<polygon points="299.48,726.98 302.68,726.98 301.08,732.48" fill="#800080" />
<line x1="320.18" y1="721.83" x2="320.18" y2="742.33" stroke="#800080" stroke-width="1.1" />
<polygon points="318.58,740.83 321.78,740.83 320.18,746.33" fill="#800080" />
<line x1="339.29" y1="735.69" x2="339.29" y2="756.19" stroke="#800080" stroke-width="1.1" />
<polygon points="337.69,754.69 340.89,754.69 339.29,760.19" fill="#800080" />
<line x1="358.39" y1="749.54" x2="358.39" y2="770.04" stroke="#800080" stroke-width="1.1" />
<polygon points="356.79,768.54 359.99,768.54 358.39,774.04" fill="#800080" />
<line x1="377.5" y1="763.4" x2="377.5" y2="783.9" stroke="#800080" stroke-width="1.1" />
<polygon points="375.9,782.4 379.1,782.4 377.5,787.9" fill="#800080" />
<line x1="396.6" y1="777.25" x2="396.6" y2="797.75" stroke="#800080" stroke-width="1.1" />
<polygon points="395,796.25 398.2,796.25 396.6,801.75" fill="#800080" />
<line x1="415.7" y1="791.1" x2="415.7" y2="811.6" stroke="#800080" stroke-width="1.1" />
<polygon points="414.1,810.1 417.3,810.1 415.7,815.6" fill="#800080" />
<line x1="434.81" y1="804.96" x2="434.81" y2="825.46" stroke="#800080" stroke-width="1.1" />
<polygon points="433.21,823.96 436.41,823.96 434.81,829.46" fill="#800080" />
<line x1="453.91" y1="818.81" x2="453.91" y2="839.31" stroke="#800080" stroke-width="1.1" />
<polygon points="452.31,837.81 455.51,837.81 453.91,843.31" fill="#800080" />
<line x1="473.02" y1="832.67" x2="473.02" y2="853.17" stroke="#800080" stroke-width="1.1" />
<polygon points="471.42,851.67 474.62,851.67 473.02,857.17" fill="#800080" />
<line x1="492.12" y1="846.52" x2="492.12" y2="867.02" stroke="#800080" stroke-width="1.1" />
<polygon points="490.52,865.52 493.72,865.52 492.12,871.02" fill="#800080" />
<line x1="511.23" y1="860.38" x2="511.23" y2="880.88" stroke="#800080" stroke-width="1.1" />
<polygon points="509.62,879.38 512.83,879.38 511.23,884.88" fill="#800080" />
<circle cx="672.73" cy="519.58" r="2.5" fill="#008000"/>
<circle cx="594.58" cy="559.38" r="2.5" fill="#008000"/>
<circle cx="516.42" cy="599.2" r="2.5" fill="#008000"/>
<circle cx="438.28" cy="639" r="2.5" fill="#008000"/>
<circle cx="360.12" cy="678.82" r="2.5" fill="#008000"/>
<circle cx="281.98" cy="718.62" r="2.5" fill="#008000"/>
<circle cx="901.98" cy="685.83" r="2.5" fill="#008000"/>
<circle cx="823.83" cy="725.63" r="2.5" fill="#008000"/>
<circle cx="745.67" cy="765.45" r="2.5" fill="#008000"/>
<circle cx="667.53" cy="805.25" r="2.5" fill="#008000"/>
<circle cx="589.38" cy="845.07" r="2.5" fill="#008000"/>
<circle cx="511.23" cy="884.88" r="2.5" fill="#008000"/>
<rect x="670" y="87" width="355" height="294" fill="#7eb4ea" />
<rect x="672" y="89" width="351" height="290" fill="#ffffff" />
<rect x="995" y="89" width="28" height="290" fill="#f0f0f0" />
<rect x="1001" y="118" width="16.5" height="147.5" fill="#c2c3c9" />
<polygon points="1005,107.5 1013.5,107.5 1009.25,102" fill="#c3c3c3" />
<polygon points="1005,362 1013.5,362 1009.25,367.5" fill="#c3c3c3" />
<rect x="674" y="129" width="319" height="36" fill="#bfe5fb" />
<clipPath id="ddclip"><rect x="672" y="89" width="323" height="290"/></clipPath>
<g clip-path="url(#ddclip)">
<text transform="translate(679 118.8) scale(1 1.11)" font-size="19.3" fill="#000" >BLC 1: Dead Load</text>
<text transform="translate(679 156.8) scale(1 1.11)" font-size="19.3" fill="#000" >BLC 2: BLC 1 Transient Area Loads</text>
<text transform="translate(679 194.8) scale(1 1.11)" font-size="19.3" fill="#000" >BLC 3:</text>
<text transform="translate(679 232.8) scale(1 1.11)" font-size="19.3" fill="#000" >BLC 4:</text>
<text transform="translate(679 270.8) scale(1 1.11)" font-size="19.3" fill="#000" >BLC 5:</text>
<text transform="translate(679 308.8) scale(1 1.11)" font-size="19.3" fill="#000" >BLC 6:</text>
<text transform="translate(679 346.8) scale(1 1.11)" font-size="19.3" fill="#000" >BLC 7:</text>
<text transform="translate(679 384.8) scale(1 1.11)" font-size="19.3" fill="#000" >BLC 8:</text>
</g>
</svg>
</body></html>
